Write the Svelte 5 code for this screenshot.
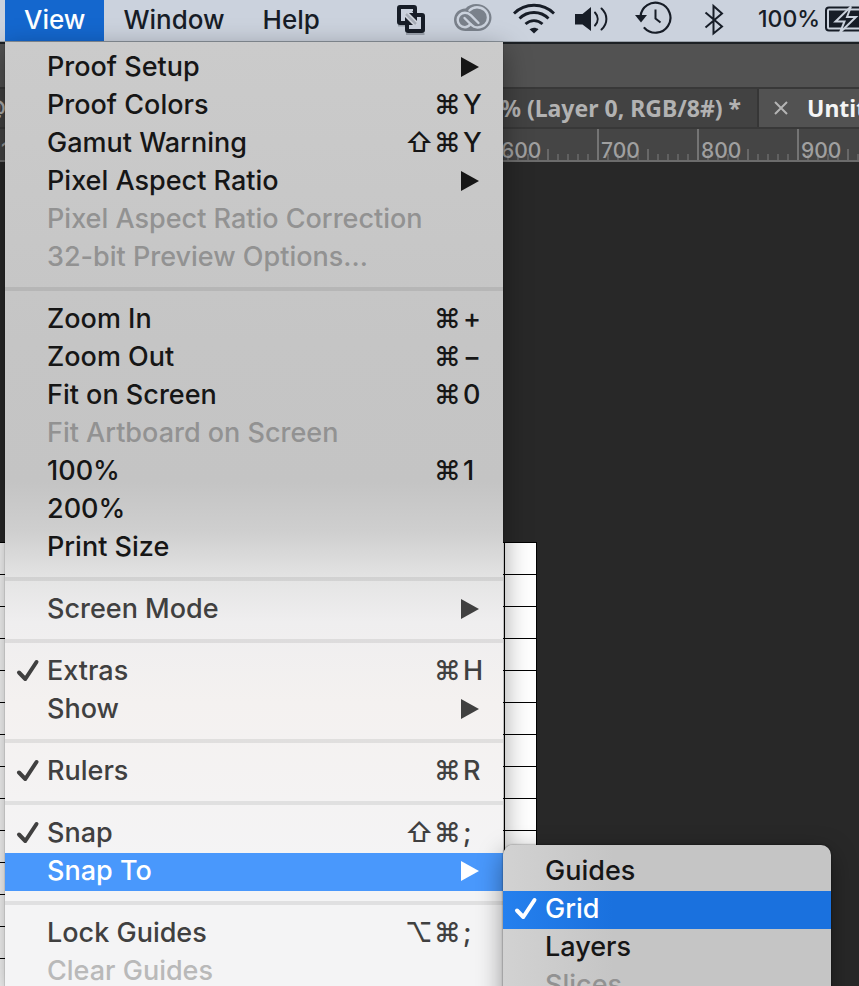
<script>
  const menu = [
    { label: 'Proof Setup', sub: true },
    { label: 'Proof Colors', mods: '⌘', key: 'Y' },
    { label: 'Gamut Warning', mods: '⇧⌘', key: 'Y' },
    { label: 'Pixel Aspect Ratio', sub: true },
    { label: 'Pixel Aspect Ratio Correction', off: true },
    { label: '32-bit Preview Options...', off: true },
    { sep: true },
    { label: 'Zoom In', mods: '⌘', key: '+' },
    { label: 'Zoom Out', mods: '⌘', key: '−' },
    { label: 'Fit on Screen', mods: '⌘', key: '0' },
    { label: 'Fit Artboard on Screen', off: true },
    { label: '100%', mods: '⌘', key: '1' },
    { label: '200%' },
    { label: 'Print Size' },
    { sep: true },
    { label: 'Screen Mode', sub: true, light: true },
    { sep: true },
    { label: 'Extras', mods: '⌘', key: 'H', checked: true, light: true },
    { label: 'Show', sub: true, light: true },
    { sep: true },
    { label: 'Rulers', mods: '⌘', key: 'R', checked: true, light: true },
    { sep: true },
    { label: 'Snap', mods: '⇧⌘', key: ';', checked: true, light: true },
    {
      label: 'Snap To',
      sub: true,
      light: true,
      active: true,
      children: [
        { label: 'Guides' },
        { label: 'Grid', checked: true, active: true },
        { label: 'Layers' },
        { label: 'Slices', off: true }
      ]
    },
    { sep: true },
    { label: 'Lock Guides', mods: '⌥⌘', key: ';', light: true },
    { label: 'Clear Guides', off: true, light: true }
  ];
  const marks = [100, 200, 300, 400, 500, 600, 700, 800, 900, 1000, 1100, 1200, 1300, 1400, 1500, 1600];
</script>

{#snippet row(item)}
  <button
    type="button"
    class="item"
    class:active={item.active}
    class:light={item.light}
    disabled={item.off}
    role={item.checked ? 'menuitemcheckbox' : 'menuitem'}
    aria-checked={item.checked ? true : undefined}
    aria-haspopup={item.sub ? 'menu' : undefined}
  >
    <span class="mark">
      {#if item.checked}
        <svg width="24" height="24" viewBox="0 0 24 24" aria-hidden="true">
          <path d="M3 13.500 9.300 20 20.500 3" fill="none" stroke="currentColor" stroke-width="4" stroke-linecap="round" stroke-linejoin="round" />
        </svg>
      {/if}
    </span>
    <span class="label">{item.label}</span>
    {#if item.sub}
      <svg class="arrow" width="18" height="20" viewBox="0 0 18 20" aria-hidden="true"><path d="M0 0 18 10 0 20z" fill="currentColor" /></svg>
    {:else if item.key}
      {#each item.mods as m}<span class="mod">{m}</span>{/each}
      <span class="key">{item.key}</span>
    {/if}
  </button>
{/snippet}

<div class="screen">
  <header class="menubar">
    <nav>
      <button type="button" class="open">View</button>
      <button type="button">Window</button>
      <button type="button">Help</button>
    </nav>
    <div class="status">
      <svg width="35" height="41" viewBox="0 0 35 41" aria-hidden="true">
        <path d="M1 25.500h8M9 34h18.500" stroke="#9aa1ac" stroke-width="2" />
        <rect x="2" y="7" width="16" height="16" rx="1" fill="none" stroke="#171d27" stroke-width="4" />
        <rect x="10" y="15" width="16" height="16" rx="1" fill="none" stroke="#171d27" stroke-width="4" />
        <path d="M8 13h4l3 3 5 5v4h-4l-8-8z" fill="#d3d7df" />
        <path d="M9 14l10 10" stroke="#a7adb7" stroke-width="2.500" />
        <path d="M8 19v6h6zM15 11h5v5z" fill="#171d27" />
      </svg>
      <svg width="37" height="41" viewBox="0 0 37 41" aria-hidden="true">
        <path d="M11.500 8.500C14 5.500 18 4 22 4c8.500 0 15.500 6 15.500 13.500S31.500 31 24 31H11.500C5 31 0 26.500 0 20S5 8.500 11.500 8.500z" fill="#7a818b" />
        <path d="M16.500 24c-1.500 2-3 3.300-5.500 3.300a7.300 7.300 0 0 1 0-14.600c2.500 0 4.300 1 6 2.700l7.500 7.600" fill="none" stroke="#cbd2dd" stroke-width="2.400" stroke-linecap="round" />
        <path d="M15.500 10.500c2-2.200 4.500-3.300 7.500-3.300 6 0 11 4.500 11 10.300S29.500 27.500 23.500 27.500c-3 0-5-1.500-7-3.500L10.500 18" fill="none" stroke="#cbd2dd" stroke-width="2.400" stroke-linecap="round" />
      </svg>
      <svg width="40" height="41" viewBox="0 0 40 41" aria-hidden="true">
        <g fill="none" stroke="#171d27" stroke-width="2.800">
          <path d="M1 13.500C12 2.500 30 2.500 41 13.500" />
          <path d="M6.500 18.500c8-8 21-8 29 0" />
          <path d="M12.500 24c5-4.600 12-4.600 17 0" />
        </g>
        <path d="M16.500 29.300c2.800-2 6.200-2 9 0L21 33.500z" fill="#171d27" />
      </svg>
      <svg width="38" height="41" viewBox="0 0 38 41" aria-hidden="true">
        <path d="M0 14h7.500L16 7v24l-8.500-6.500H0z" fill="#171d27" />
        <path d="M20 12.500c3.600 4 3.600 9 0 13M26.500 8.500c6.500 6 6.500 15 0 21" fill="none" stroke="#171d27" stroke-width="2" stroke-linecap="round" />
      </svg>
      <svg width="42" height="41" viewBox="0 0 42 41" aria-hidden="true">
        <path d="M5.500 16.500A15 15 0 1 1 9.500 28" fill="none" stroke="#171d27" stroke-width="2.200" stroke-linecap="round" />
        <path d="M0 15h12l-6 7.500z" fill="#171d27" />
        <path d="M20.500 9.500v9l5 4" fill="none" stroke="#171d27" stroke-width="2" />
      </svg>
      <svg width="37" height="41" viewBox="0 0 37 41" aria-hidden="true">
        <path d="M6.500 12.500 23 26.500l-8.500 7V6l8.500 7.500L6.500 27.500" fill="none" stroke="#171d27" stroke-width="2" />
      </svg>
      <span class="charge">
        100%
        <svg width="52" height="41" viewBox="0 0 52 41" aria-hidden="true">
          <rect x="1" y="7.500" width="44" height="23" rx="3" fill="none" stroke="#171d27" stroke-width="2" />
          <path d="M4 10.500h38v17H4z" fill="#171d27" />
          <path d="M24 6.500 8.500 21.500h9L13 32.500 29 17h-9z" transform="translate(2 0)" fill="#171d27" stroke="#cbd2dd" stroke-width="2" />
          <path d="M47 15c3 1 3 7 0 8z" fill="#171d27" />
        </svg>
      </span>
    </div>
  </header>

  <main>
    <div class="optbar"></div>
    <div class="tabs">
      <div class="tab behind"><span>@ 100</span><span>% (Layer 0, RGB/8#) *</span></div>
      <div class="tab front">
        <button type="button" aria-label="Close tab">
          <svg width="12" height="12" viewBox="0 0 12 12" aria-hidden="true"><path d="M0 0l12 12M12 0 0 12" stroke="#b4b4b4" stroke-width="2" /></svg>
        </button>
        <span>Untitled-2</span>
      </div>
    </div>
    <div class="ruler">
      {#each marks as n}<span>{n}</span>{/each}
    </div>
    <div class="canvas"><div class="art"></div></div>
  </main>

  <ul class="menu" role="menu" aria-label="View">
    {#each menu as item}
      {#if item.sep}
        <li class="sep" role="separator"></li>
      {:else}
        <li role="none">
          {@render row(item)}
          {#if item.children}
            <ul class="submenu" role="menu" aria-label={item.label}>
              {#each item.children as child}
                <li role="none">{@render row(child)}</li>
              {/each}
            </ul>
          {/if}
        </li>
      {/if}
    {/each}
  </ul>
</div>

<style>
  :global(body) {
    margin: 0;
    background: #282828;
  }
  .screen {
    position: relative;
    display: flex;
    flex-direction: column;
    height: 100vh;
    overflow: hidden;
    font: 450 27px/38px Inter, 'Liberation Sans', sans-serif;
    color: #171d27;
  }
  button {
    border: 0;
    margin: 0;
    background: none;
    font: inherit;
    color: inherit;
    text-align: left;
    white-space: nowrap;
  }
  svg {
    display: block;
    flex: none;
    overflow: visible;
  }
  .menubar {
    display: flex;
    flex: none;
    height: 41px;
    padding-left: 5px;
    background: #cbd2dd;
    border-bottom: 1px solid #98a0a9;
  }
  nav {
    display: flex;
    flex: none;
    width: 392px;
    font-size: 26px;
  }
  nav button {
    padding: 0 19px 2px;
  }
  nav .open {
    background: #1467ce;
    color: #fff;
    font-weight: 500;
  }
  .status {
    display: flex;
    flex: none;
    gap: 22px;
  }
  .charge {
    display: flex;
    gap: 5px;
    font-size: 23px;
  }

  main {
    display: flex;
    flex: 1;
    flex-direction: column;
    background: #282828;
  }
  .optbar {
    height: 43px;
    border-top: 2px solid #1c2024;
    background: #525252;
    border-bottom: 2px solid #383838;
  }
  .tabs {
    display: flex;
    height: 38px;
    overflow: hidden;
    background: #424242;
    border-bottom: 2px solid #383838;
    font: 700 23px/38px 'Noto Sans', sans-serif;
    white-space: nowrap;
  }
  .tab {
    display: flex;
    flex: none;
    align-items: center;
  }
  .behind {
    box-sizing: border-box;
    width: 759px;
    padding-right: 16px;
    justify-content: space-between;
    color: #b2b2b2;
    border-right: 2px solid #363636;
  }
  .behind span:first-child {
    direction: rtl;
    width: 6px;
    overflow: hidden;
  }
  .front {
    flex: 1;
    gap: 20px;
    padding-left: 16px;
    background: #525252;
    color: #f4f4f4;
  }
  .front button {
    padding: 0;
  }
  .ruler {
    display: flex;
    height: 33px;
    overflow: hidden;
    box-sizing: border-box;
    border-bottom: 2px solid #6c6c6c;
    font-size: 21px;
    line-height: 44px;
    color: #a0a0a0;
    background-color: #454545;
    background-image:
      linear-gradient(90deg, #747474 2px, transparent 2px),
      linear-gradient(90deg, #686868 2px, transparent 2px),
      linear-gradient(90deg, #606060 2px, transparent 2px);
    background-size: 100px 33px, 50px 11px, 10px 6px;
    background-position: -3px 0, -3px 100%, -3px 100%;
    background-repeat: repeat-x;
  }
  .ruler span {
    flex: none;
    box-sizing: border-box;
    width: 100px;
    padding-left: 1px;
  }
  .canvas {
    flex: 1;
    padding-top: 380px;
  }
  .art {
    width: 537px;
    height: 100%;
    background-color: #fff;
    background-image:
      linear-gradient(#000 1px, transparent 1px),
      linear-gradient(90deg, #000 1px, transparent 1px);
    background-size: 32px 32px;
    background-position: 24px 0;
  }

  ul {
    margin: 0;
    padding: 0;
    list-style: none;
  }
  .menu {
    position: absolute;
    top: 42px;
    left: 5px;
    width: 498px;
    padding-top: 7px;
    background: linear-gradient(#cbcbcb, #c5c5c5 300px, #c4c4c4 440px, #cfcfcf 490px, #e5e5e5 540px, #efeeef 580px, #f4f1f0 660px, #f4f4f5 820px);
    box-shadow: 0 8px 26px rgba(0, 0, 0, 0.4), 0 0 1px rgba(0, 0, 0, 0.5);
  }
  li {
    position: relative;
  }
  .sep {
    height: 4px;
    padding: 10px 0;
    background: rgba(0, 0, 0, 0.08) content-box;
  }
  .item {
    display: flex;
    align-items: center;
    width: 100%;
    height: 38px;
    padding: 0 0 2px;
    color: #161616;
  }
  .item.light {
    color: #404040;
  }
  .item:disabled {
    color: #929292;
  }
  .item.light:disabled {
    color: #b9b9b9;
  }
  .mark {
    width: 31px;
    padding-left: 11px;
  }
  .label {
    flex: 1;
  }
  .arrow {
    margin-right: 24px;
  }
  .mod {
    width: 29px;
  }
  .key {
    width: 40px;
  }
  .item.active {
    background: #4998fc;
    color: #fff;
    font-weight: 500;
  }
  .submenu {
    position: absolute;
    top: -8px;
    left: 100%;
    width: 328px;
    padding: 8px 0;
    border-radius: 10px;
    background: linear-gradient(90deg, #d2d2d2, #c5c5c5 110px);
    box-shadow: 0 8px 26px rgba(0, 0, 0, 0.4), 0 0 2px rgba(0, 0, 0, 0.6);
  }
  .submenu .active {
    background: linear-gradient(90deg, #2580ee, #1a71de 110px);
  }
</style>
